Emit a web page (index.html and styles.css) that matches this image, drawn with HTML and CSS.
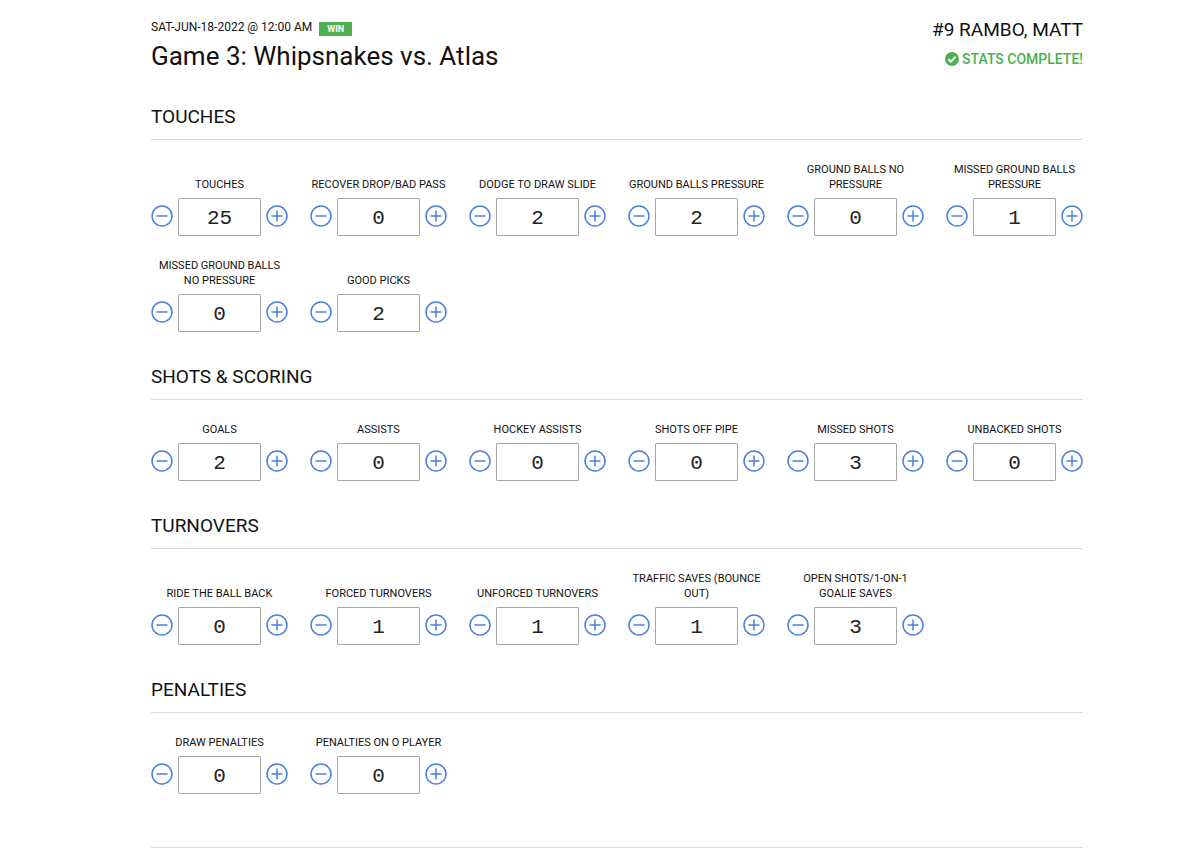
FILE: index.html
```html
<!DOCTYPE html>
<html lang="en">
<head>
<meta charset="utf-8">
<title>Game 3: Whipsnakes vs. Atlas</title>
<link rel="stylesheet" href="styles.css">
</head>
<body>
<svg class="sprite" aria-hidden="true">
  <symbol id="minus" viewBox="0 0 22 22"><circle cx="11" cy="11" r="10"/><path d="M5.5 11h11"/></symbol>
  <symbol id="plus" viewBox="0 0 22 22"><circle cx="11" cy="11" r="10"/><path d="M5.5 11h11M11 5.5v11"/></symbol>
</svg>
<main class="page">
  <header class="header">
    <div>
      <div class="meta"><span>SAT-JUN-18-2022 @ 12:00 AM</span><span class="badge">WIN</span></div>
      <h1 class="title">Game 3: Whipsnakes vs. Atlas</h1>
    </div>
    <div class="player">
      <div class="player-name">#9 RAMBO, MATT</div>
      <div class="status">
        <svg class="check" viewBox="0 0 14 14" aria-hidden="true"><circle cx="7" cy="7" r="7"/><path d="M3.4 7.2l2.5 2.5 4.8-4.9"/></svg>
        <span>STATS COMPLETE!</span>
      </div>
    </div>
  </header>

  <section class="section">
    <h2 class="heading">TOUCHES</h2>
    <div class="grid">
      <div class="stat"><label class="label" for="s1">TOUCHES</label><div class="control"><button class="step" aria-label="Decrease"><svg><use href="#minus"/></svg></button><input class="value" id="s1" value="25"><button class="step" aria-label="Increase"><svg><use href="#plus"/></svg></button></div></div>
      <div class="stat"><label class="label" for="s2">RECOVER DROP/BAD PASS</label><div class="control"><button class="step" aria-label="Decrease"><svg><use href="#minus"/></svg></button><input class="value" id="s2" value="0"><button class="step" aria-label="Increase"><svg><use href="#plus"/></svg></button></div></div>
      <div class="stat"><label class="label" for="s3">DODGE TO DRAW SLIDE</label><div class="control"><button class="step" aria-label="Decrease"><svg><use href="#minus"/></svg></button><input class="value" id="s3" value="2"><button class="step" aria-label="Increase"><svg><use href="#plus"/></svg></button></div></div>
      <div class="stat"><label class="label" for="s4">GROUND BALLS PRESSURE</label><div class="control"><button class="step" aria-label="Decrease"><svg><use href="#minus"/></svg></button><input class="value" id="s4" value="2"><button class="step" aria-label="Increase"><svg><use href="#plus"/></svg></button></div></div>
      <div class="stat"><label class="label" for="s5">GROUND BALLS NO PRESSURE</label><div class="control"><button class="step" aria-label="Decrease"><svg><use href="#minus"/></svg></button><input class="value" id="s5" value="0"><button class="step" aria-label="Increase"><svg><use href="#plus"/></svg></button></div></div>
      <div class="stat"><label class="label" for="s6">MISSED GROUND BALLS PRESSURE</label><div class="control"><button class="step" aria-label="Decrease"><svg><use href="#minus"/></svg></button><input class="value" id="s6" value="1"><button class="step" aria-label="Increase"><svg><use href="#plus"/></svg></button></div></div>
      <div class="stat"><label class="label" for="s7">MISSED GROUND BALLS NO PRESSURE</label><div class="control"><button class="step" aria-label="Decrease"><svg><use href="#minus"/></svg></button><input class="value" id="s7" value="0"><button class="step" aria-label="Increase"><svg><use href="#plus"/></svg></button></div></div>
      <div class="stat"><label class="label" for="s8">GOOD PICKS</label><div class="control"><button class="step" aria-label="Decrease"><svg><use href="#minus"/></svg></button><input class="value" id="s8" value="2"><button class="step" aria-label="Increase"><svg><use href="#plus"/></svg></button></div></div>
    </div>
  </section>

  <section class="section">
    <h2 class="heading">SHOTS &amp; SCORING</h2>
    <div class="grid">
      <div class="stat"><label class="label" for="s9">GOALS</label><div class="control"><button class="step" aria-label="Decrease"><svg><use href="#minus"/></svg></button><input class="value" id="s9" value="2"><button class="step" aria-label="Increase"><svg><use href="#plus"/></svg></button></div></div>
      <div class="stat"><label class="label" for="s10">ASSISTS</label><div class="control"><button class="step" aria-label="Decrease"><svg><use href="#minus"/></svg></button><input class="value" id="s10" value="0"><button class="step" aria-label="Increase"><svg><use href="#plus"/></svg></button></div></div>
      <div class="stat"><label class="label" for="s11">HOCKEY ASSISTS</label><div class="control"><button class="step" aria-label="Decrease"><svg><use href="#minus"/></svg></button><input class="value" id="s11" value="0"><button class="step" aria-label="Increase"><svg><use href="#plus"/></svg></button></div></div>
      <div class="stat"><label class="label" for="s12">SHOTS OFF PIPE</label><div class="control"><button class="step" aria-label="Decrease"><svg><use href="#minus"/></svg></button><input class="value" id="s12" value="0"><button class="step" aria-label="Increase"><svg><use href="#plus"/></svg></button></div></div>
      <div class="stat"><label class="label" for="s13">MISSED SHOTS</label><div class="control"><button class="step" aria-label="Decrease"><svg><use href="#minus"/></svg></button><input class="value" id="s13" value="3"><button class="step" aria-label="Increase"><svg><use href="#plus"/></svg></button></div></div>
      <div class="stat"><label class="label" for="s14">UNBACKED SHOTS</label><div class="control"><button class="step" aria-label="Decrease"><svg><use href="#minus"/></svg></button><input class="value" id="s14" value="0"><button class="step" aria-label="Increase"><svg><use href="#plus"/></svg></button></div></div>
    </div>
  </section>

  <section class="section">
    <h2 class="heading">TURNOVERS</h2>
    <div class="grid">
      <div class="stat"><label class="label" for="s15">RIDE THE BALL BACK</label><div class="control"><button class="step" aria-label="Decrease"><svg><use href="#minus"/></svg></button><input class="value" id="s15" value="0"><button class="step" aria-label="Increase"><svg><use href="#plus"/></svg></button></div></div>
      <div class="stat"><label class="label" for="s16">FORCED TURNOVERS</label><div class="control"><button class="step" aria-label="Decrease"><svg><use href="#minus"/></svg></button><input class="value" id="s16" value="1"><button class="step" aria-label="Increase"><svg><use href="#plus"/></svg></button></div></div>
      <div class="stat"><label class="label" for="s17">UNFORCED TURNOVERS</label><div class="control"><button class="step" aria-label="Decrease"><svg><use href="#minus"/></svg></button><input class="value" id="s17" value="1"><button class="step" aria-label="Increase"><svg><use href="#plus"/></svg></button></div></div>
      <div class="stat"><label class="label" for="s18">TRAFFIC SAVES (BOUNCE OUT)</label><div class="control"><button class="step" aria-label="Decrease"><svg><use href="#minus"/></svg></button><input class="value" id="s18" value="1"><button class="step" aria-label="Increase"><svg><use href="#plus"/></svg></button></div></div>
      <div class="stat"><label class="label" for="s19">OPEN SHOTS/1-ON-1 GOALIE SAVES</label><div class="control"><button class="step" aria-label="Decrease"><svg><use href="#minus"/></svg></button><input class="value" id="s19" value="3"><button class="step" aria-label="Increase"><svg><use href="#plus"/></svg></button></div></div>
    </div>
  </section>

  <section class="section">
    <h2 class="heading">PENALTIES</h2>
    <div class="grid">
      <div class="stat"><label class="label" for="s20">DRAW PENALTIES</label><div class="control"><button class="step" aria-label="Decrease"><svg><use href="#minus"/></svg></button><input class="value" id="s20" value="0"><button class="step" aria-label="Increase"><svg><use href="#plus"/></svg></button></div></div>
      <div class="stat"><label class="label" for="s21">PENALTIES ON O PLAYER</label><div class="control"><button class="step" aria-label="Decrease"><svg><use href="#minus"/></svg></button><input class="value" id="s21" value="0"><button class="step" aria-label="Increase"><svg><use href="#plus"/></svg></button></div></div>
    </div>
  </section>
  <hr class="rule">
</main>
</body>
</html>
```
FILE: styles.css
```css
* { box-sizing: border-box; }
body { margin: 0; background: #fff; color: #111; font-family: Roboto, sans-serif; }
.sprite { display: none; }
.page { padding: 18px 117px 0 151px; }

.header { display: flex; justify-content: space-between; margin-bottom: 29px; }
.meta { display: flex; align-items: center; gap: 7px; font-size: 12px; line-height: 18px; }
.badge { margin-top: 4px; padding: 0 8px; background: #4caf50; color: #fff; font-size: 9px; font-weight: 700; line-height: 14px; }
.title { margin: 0; font-size: 26px; font-weight: 400; line-height: 40px; }
.player { text-align: right; }
.player-name { font-size: 19px; line-height: 24px; }
.status { display: flex; align-items: center; justify-content: flex-end; gap: 3px; margin-top: 8px; color: #4caf50; font-size: 14px; font-weight: 500; line-height: 18px; }
.check { width: 14px; height: 14px; fill: #4caf50; }
.check path { fill: none; stroke: #fff; stroke-width: 2; }

.section { margin-bottom: 33px; }
.heading { margin: 0 0 22px; padding-bottom: 10px; border-bottom: 1px solid #dcdcdc; font-size: 19px; font-weight: 400; line-height: 24px; }
.grid { display: grid; grid-template-columns: repeat(6, 1fr); gap: 22px; }
.stat { display: flex; flex-direction: column; justify-content: flex-end; gap: 6px; min-width: 0; }
.label { text-align: center; font-size: 11px; line-height: 15px; }
.control { display: flex; gap: 5px; }
.step { flex: none; width: 22px; height: 36px; padding: 0; border: 0; background: none; }
.step svg { display: block; width: 22px; height: 22px; fill: none; stroke: #4a80e0; stroke-width: 1.5; }
.value { flex: 1; min-width: 0; height: 38px; padding: 2px 0 0; border: 1px solid #a6a6a6; border-radius: 1px; background: #fff; color: #222; text-align: center; font-family: "Liberation Mono", monospace; font-size: 21px; }
.rule { height: 1px; margin: 53px 0 0; border: 0; background: #dcdcdc; }
```
